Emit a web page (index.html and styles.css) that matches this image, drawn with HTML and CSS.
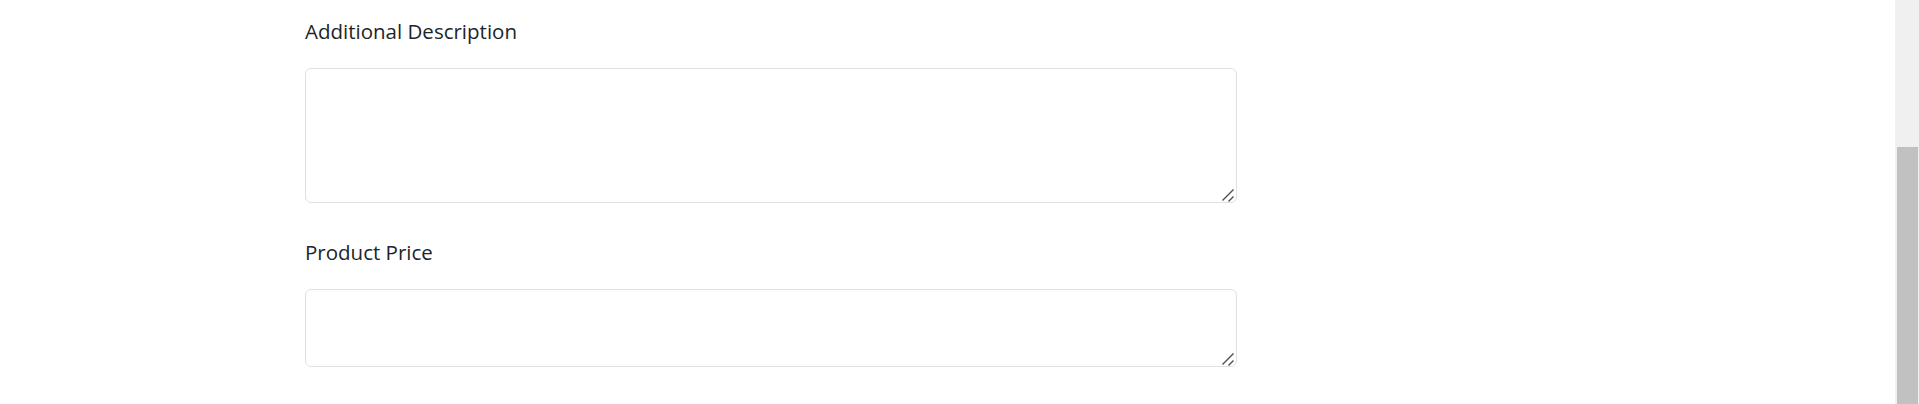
FILE: index.html
```html
<!DOCTYPE html>
<html>
<head>
<meta charset="utf-8">
<link rel="stylesheet" href="styles.css">
</head>
<body>
<div class="page">
  <form class="form">
    <div class="field">
      <label class="label" for="desc">Additional Description</label>
      <div class="box">
        <textarea id="desc" class="input input-tall"></textarea>
        <svg class="grip" width="14" height="14" viewBox="0 0 14 14"><path d="M1.5 12.5 L12.5 1.5 M7.5 13.5 L12.5 8.5" stroke="#4d4d4d" stroke-width="1.4" fill="none"/></svg>
      </div>
    </div>
    <div class="field">
      <label class="label" for="price">Product Price</label>
      <div class="box">
        <textarea id="price" class="input input-short"></textarea>
        <svg class="grip" width="14" height="14" viewBox="0 0 14 14"><path d="M1.5 12.5 L12.5 1.5 M7.5 13.5 L12.5 8.5" stroke="#4d4d4d" stroke-width="1.4" fill="none"/></svg>
      </div>
    </div>
  </form>
</div>
<div class="scrollbar"><div class="thumb"></div></div>
</body>
</html>
```
FILE: styles.css
```css
html, body {
  margin: 0;
  padding: 0;
  background: #fff;
  overflow: hidden;
}
body {
  font-family: "Open Sans", "Noto Sans", sans-serif;
  color: #212529;
}
.page {
  padding: 16px 0 0 305px;
}
.form {
  display: flex;
  flex-direction: column;
  gap: 34px;
  width: 932px;
}
.field {
  display: flex;
  flex-direction: column;
  gap: 22px;
}
.label {
  font-size: 20.5px;
  line-height: 30px;
}
.box {
  position: relative;
  width: 932px;
}
.input {
  display: block;
  box-sizing: border-box;
  width: 932px;
  border: 1px solid #dee2e6;
  border-radius: 6px;
  resize: none;
  margin: 0;
  padding: 6px 12px;
  font: inherit;
  outline: none;
  background: #fff;
}
.input-tall { height: 135px; }
.input-short { height: 78px; }
.grip {
  position: absolute;
  right: 2px;
  bottom: 1px;
  pointer-events: none;
}
.scrollbar {
  position: fixed;
  top: 0;
  right: 0;
  width: 24px;
  height: 100%;
  background: #f0f0f0;
}
.thumb {
  position: absolute;
  left: 2px;
  right: 1px;
  top: 147px;
  bottom: 0;
  background: #c1c1c1;
}
```
